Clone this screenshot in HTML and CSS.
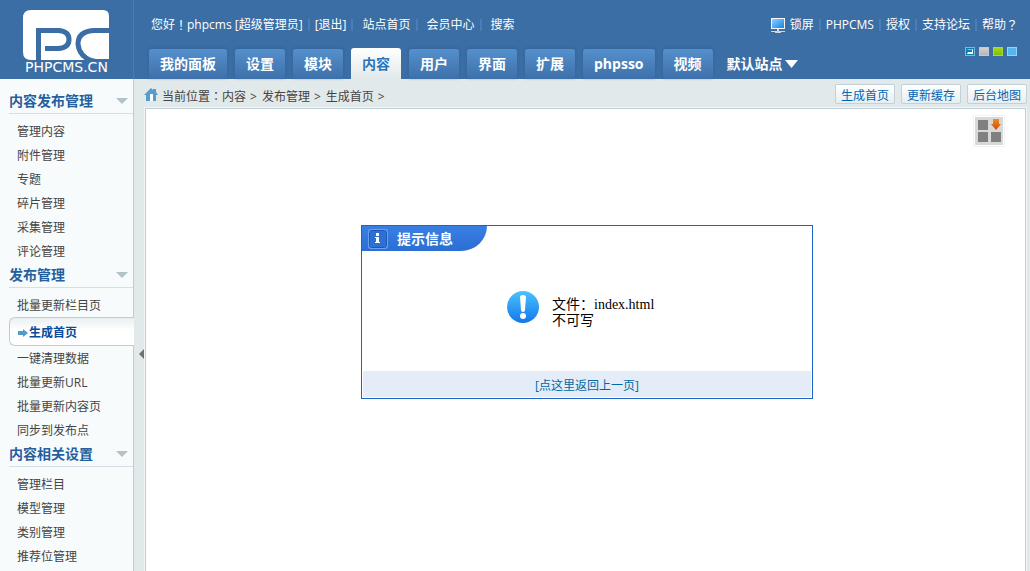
FILE: index.html
```html
<!DOCTYPE html>
<html lang="zh-CN">
<head>
<meta charset="utf-8">
<title>PHPCMS</title>
<link rel="stylesheet" href="styles.css">
</head>
<body>
<header class="header">
  <a class="logo" href="#" aria-label="PHPCMS.CN">
    <svg class="logo-mark" viewBox="0 0 86 50">
      <path fill="#fff" d="M8 0H80Q86 0 86 6V44H72L66 50H8Q0 50 0 42V8Q0 0 8 0Z"/>
      <g fill="none" stroke="#3b6ea5" stroke-width="5">
        <path d="M15.500 50V20.500H35Q46 21 46 29.500T35 38.500H22"/>
        <path d="M86 20.500H72Q55 21 55 34Q56 46 69 51"/>
      </g>
      <path fill="#3b6ea5" d="M61 50Q68 49 73 49H86V50Z"/>
      <path fill="#fff" d="M66 43H86V49H73Q66 48 62 43Z"/>
    </svg>
    <span class="logo-text">PHPCMS.CN</span>
  </a>
  <div class="header-main">
    <div class="topline">
      <div class="links links-user">
        <span>您好<span class="wide-mark" lang="zh-TW">！</span>phpcms [超级管理员]</span><a href="#">[退出]</a><a class="roomy" href="#">站点首页</a><a class="roomy" href="#">会员中心</a><a class="roomy" href="#">搜索</a>
      </div>
      <div class="links links-help">
        <a class="lock" href="#"><svg width="14" height="15" viewBox="0 0 14 15"><defs><linearGradient id="scr" x1="0" y1="0" x2="1" y2="1"><stop offset="0" stop-color="#8fd0ff"/><stop offset="1" stop-color="#1484e8"/></linearGradient></defs><path fill="#f4f6f8" d="M0 0H14V11H0Z"/><path fill="url(#scr)" d="M1 1H13V10H1Z"/><path fill="#d9d4d4" d="M6 11H8V13H14V14H10V15H4V14H0V13H6Z"/></svg>锁屏</a><a href="#">PHPCMS</a><a href="#">授权</a><a href="#">支持论坛</a><a href="#">帮助<span class="wide-mark" lang="zh-TW">？</span></a>
      </div>
    </div>
    <div class="navline">
      <nav class="tabs">
        <a href="#">我的面板</a><a href="#">设置</a><a href="#">模块</a><a class="on" href="#">内容</a><a href="#">用户</a><a href="#">界面</a><a href="#">扩展</a><a href="#">phpsso</a><a href="#">视频</a>
        <button class="site" type="button">默认站点<svg width="13" height="8" viewBox="0 0 13 8"><path fill="#fff" d="M0 0H13L6.500 8Z"/></svg></button>
      </nav>
      <div class="skins">
        <button class="skin skin-on" type="button" aria-label="深蓝"><span></span></button>
        <button class="skin skin-grey" type="button" aria-label="灰色"></button>
        <button class="skin skin-green" type="button" aria-label="绿色"></button>
        <button class="skin skin-sky" type="button" aria-label="天蓝"></button>
      </div>
    </div>
  </div>
</header>
<div class="body">
  <aside class="side">
    <h3>内容发布管理<i class="caret"></i></h3>
    <ul>
      <li><a href="#">管理内容</a></li><li><a href="#">附件管理</a></li><li><a href="#">专题</a></li><li><a href="#">碎片管理</a></li><li><a href="#">采集管理</a></li><li><a href="#">评论管理</a></li>
    </ul>
    <h3>发布管理<i class="caret"></i></h3>
    <ul>
      <li><a href="#">批量更新栏目页</a></li>
      <li class="current"><a href="#"><svg width="10" height="8" viewBox="0 0 10 8"><path fill="#4f9bca" d="M0 2H5V0L10 4L5 8V6H0Z"/></svg>生成首页</a></li>
      <li><a href="#">一键清理数据</a></li><li><a href="#">批量更新URL</a></li><li><a href="#">批量更新内容页</a></li><li><a href="#">同步到发布点</a></li>
    </ul>
    <h3>内容相关设置<i class="caret"></i></h3>
    <ul>
      <li><a href="#">管理栏目</a></li><li><a href="#">模型管理</a></li><li><a href="#">类别管理</a></li><li><a href="#">推荐位管理</a></li>
    </ul>
  </aside>
  <button class="fold" type="button" aria-label="收起菜单"><svg width="5" height="10" viewBox="0 0 5 10"><path fill="#707070" d="M5 0V10L0 5Z"/></svg></button>
  <main class="main">
    <div class="bar">
      <div class="crumbs"><svg width="14" height="13" viewBox="0 0 14 13"><path fill="#559dcd" d="M7 0L9 2V1H12V4L14 7H12V13H9V7H6V13H2V7H0Z"/><path fill="#f7fbfd" d="M6 6H9V13H6Z"/></svg><span>当前位置<span class="wide-mark" lang="zh-TW">：</span>内容<i>&gt;</i>发布管理<i>&gt;</i>生成首页<i>&gt;</i></span></div>
      <div class="actions"><a href="#">生成首页</a><a href="#">更新缓存</a><a href="#">后台地图</a></div>
    </div>
    <div class="frame">
      <button class="panel-toggle" type="button" aria-label="快捷面板"><svg width="28" height="28" viewBox="0 0 28 28"><defs><linearGradient id="arr" x1="0" y1="0" x2="0" y2="1"><stop offset="0" stop-color="#f08a24"/><stop offset="1" stop-color="#cf4a0c"/></linearGradient></defs><path fill="#d8d8d8" d="M0 0H28V28H0Z"/><path fill="#808080" d="M3 3H13V13H3ZM3 15H13V25H3ZM16 15H26V25H16Z"/><path fill="url(#arr)" d="M18 2H24V7H26L21 13L16 7H18Z"/></svg></button>
      <section class="dialog">
        <h5><svg width="20" height="20" viewBox="0 0 20 20"><rect x="1" y="1" width="18" height="18" rx="2" fill="#2c70d4" stroke="#6ba0ee" stroke-width="2"/><rect x="1.500" y="1.500" width="17" height="17" rx="2" fill="none" stroke="#1e56b2"/><path fill="#fff" d="M8 4H11V7H8ZM7 8H11V13H12V14H7V13H8V9H7Z"/></svg>提示信息</h5>
        <div class="message">
          <svg width="32" height="32" viewBox="0 0 32 32"><defs><linearGradient id="ball" x1="0" y1="0" x2="0" y2="1"><stop offset="0" stop-color="#49c3fb"/><stop offset="1" stop-color="#1477ec"/></linearGradient></defs><circle cx="16" cy="16" r="16" fill="url(#ball)"/><path fill="#fff" d="M13 6Q13 4 16 4T19 6L18 19Q18 21 16 21T14 19Z"/><circle cx="16" cy="25" r="3" fill="#fff"/></svg>
          <p>文件：index.html<br>不可写</p>
        </div>
        <div class="foot"><a href="#">[点这里返回上一页]</a></div>
      </section>
    </div>
  </main>
</div>
</body>
</html>
```

FILE: styles.css
```css
* { box-sizing: border-box; }
body {
  margin: 0;
  height: 100vh;
  display: flex;
  flex-direction: column;
  overflow: hidden;
  background: #e2e9ea;
  color: #444;
  font: 12px/24px "Open Sans", "Noto Sans CJK SC", sans-serif;
}
a { color: inherit; text-decoration: none; }
button { margin: 0; padding: 0; border: 0; background: none; color: inherit; font: inherit; cursor: pointer; }
svg { display: block; flex: none; }
ul, h3, h5, p { margin: 0; padding: 0; list-style: none; }
.wide-mark { font-family: "Noto Sans CJK TC", sans-serif; }

.header { display: flex; flex: none; height: 79px; background: #3b6ea5; color: #fff; }
.logo { width: 134px; padding: 10px 0 0 23px; border-right: 1px solid #4a7cb3; }
.logo-mark { width: 86px; height: 50px; }
.logo-text { display: block; padding-left: 2px; font: 14px/14px "DejaVu Sans", sans-serif; }
.header-main { flex: 1; display: flex; flex-direction: column; justify-content: space-between; padding-left: 15px; }
.topline { display: flex; justify-content: space-between; padding: 13px 12px 0 2px; }
.links { display: flex; white-space: nowrap; }
.links > * { display: flex; align-items: center; white-space: pre; }
.links > * + *::before { content: ""; width: 2px; height: 12px; margin: 0 5px; background: #4a7eb8; }
.links-user > .roomy::before { margin: 0 9px 0 5px; }
.lock svg { margin-right: 5px; }
.navline { display: flex; justify-content: space-between; height: 32px; padding-right: 13px; }
.tabs { display: flex; align-items: flex-end; gap: 8px; font-size: 14px; font-weight: bold; white-space: nowrap; }
.tabs a {
  height: 30px;
  padding: 0 11px;
  line-height: 30px;
  border-radius: 3px 3px 0 0;
  background: linear-gradient(#5590cd, #3d70a9);
  box-shadow: 0 -1px 3px #33639a;
}
.tabs .on { height: 31px; line-height: 32px; background: linear-gradient(#fff, #e2e9ea); color: #2b73ba; box-shadow: none; }
.site { display: flex; align-items: center; gap: 2px; height: 30px; padding-left: 6px; }
.skins { display: flex; gap: 4px; }
.skin { display: flex; width: 10px; height: 9px; border: 1px solid #c9c9cc; }
.skin-on { padding: 1px; border-color: #65c2e4; background: #0b7eb0; }
.skin-on span { flex: 1; height: 5px; border: solid #fff; border-width: 1px 1px 2px; border-color: #65c2e4 #fff #fff #0b7eb0; }
.skin-grey { background: linear-gradient(#d2d2d4, #b4b4b8); }
.skin-green { border-color: #a7dc2a; background: linear-gradient(#a6d81c, #7ebc0a); }
.skin-sky { border-color: #8cd4fa; background: #55b7ee; }

.body { flex: 1; display: flex; min-height: 0; }
.side { width: 134px; padding: 10px 0 0 9px; background: #f7fbfc; border-right: 1px solid #c0ccd4; }
.side h3 {
  display: flex;
  align-items: center;
  justify-content: space-between;
  height: 25px;
  padding-right: 5px;
  border-bottom: 1px solid #d5dfe5;
  color: #255f9e;
  font-size: 14px;
}
.caret { border: solid transparent; border-width: 6px 6px 0; border-top-color: #b2c2c7; }
.side ul { padding-top: 5px; }
.side li { padding-left: 8px; }
.side li a { display: block; padding-top: 2px; line-height: 22px; }
.side .current {
  margin-right: -1px;
  border: 1px solid #c0ccd4;
  border-right: 0;
  border-radius: 6px 0 0 6px;
  background: linear-gradient(#e9eff1, #fff 12px);
  color: #0b4a9e;
  font-weight: bold;
}
.side .current a { display: flex; align-items: center; gap: 1px; line-height: 25px; }
.fold { width: 10px; display: flex; align-items: center; justify-content: flex-end; padding-top: 58px; }
.main { flex: 1; display: flex; flex-direction: column; padding-right: 3px; }
.bar { display: flex; justify-content: space-between; height: 29px; }
.crumbs { display: flex; align-items: flex-start; gap: 4px; padding-top: 5px; }
.crumbs svg { margin-top: 4px; }
.crumbs i { margin: 0 5px 0 4px; font-style: normal; }
.actions { display: flex; gap: 6px; padding-top: 5px; }
.actions a {
  height: 20px;
  padding: 0 5px;
  border: 1px solid #c3d0d6;
  border-radius: 2px;
  background: linear-gradient(#fff, #e7eef0);
  color: #0066b3;
  line-height: 21px;
}
.frame {
  position: relative;
  flex: 1;
  margin: 0 1px;
  padding-left: 3px;
  border: 1px solid #bfcfd7;
  border-bottom: 0;
  outline: 1px solid #f2f6f7;
  background: #fff;
}
.panel-toggle { position: absolute; top: 6px; right: 20px; padding: 1px; border: 1px solid #f2f2f2; }
.dialog { max-width: 452px; margin: 116px auto 0; border: 1px solid #1e64c8; background: #fff; }
.dialog h5 {
  display: flex;
  align-items: center;
  gap: 9px;
  width: 125px;
  height: 25px;
  padding-left: 6px;
  border-radius: 0 0 26px 0 / 0 0 25px 0;
  background: linear-gradient(#397fe2, #2b6ed4);
  color: #fff;
  font-size: 14px;
}
.message { display: flex; gap: 13px; padding: 40px 0 42px 145px; color: #000; }
.message p { padding-top: 6px; font: 14px/16px "Liberation Serif", "Noto Sans CJK SC", serif; }
.foot { margin: 0 1px 1px; background: #e4ecf7; color: #0068a6; text-align: center; }
.foot a { display: block; padding-top: 4px; line-height: 22px; }
```
